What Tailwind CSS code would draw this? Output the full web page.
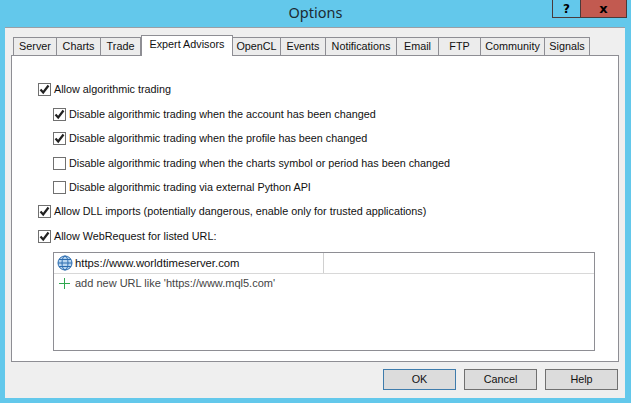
<!DOCTYPE html>
<html lang="en">
<head>
  <meta charset="UTF-8" />
  <title>Options</title>
  <script src="https://cdn.jsdelivr.net/npm/@tailwindcss/browser@4"></script>
</head>
<body class="w-[631px] h-[403px] overflow-hidden bg-[#63c8eb] font-['Liberation_Sans',sans-serif] text-[10.8px] text-[#111]">
  <div class="relative h-[403px] flex flex-col">
    <!-- title bar -->
    <div class="h-[27px] shrink-0 flex items-center justify-center pb-[1px] font-['Noto_Sans',sans-serif] text-[14.5px] text-[#1c2b33]">Options</div>
    <div class="absolute top-0 left-[552px] flex h-[18px] border border-t-0 border-[#4a3a3a]">
      <div class="w-[28px] border-r border-[#4a3a3a] flex items-center justify-center font-['DejaVu_Sans',sans-serif] font-bold text-[12px] text-black">?</div>
      <div class="w-[45px] bg-[#c25a50] flex items-center justify-center font-['DejaVu_Sans',sans-serif] font-bold text-[13px] text-black">x</div>
    </div>

    <!-- client area -->
    <div class="ml-[5px] w-[620px] h-[371px] bg-[#efefef] border-t border-[#9a9fa6] pt-[7px] px-[6px] flex flex-col">
      <!-- tabs -->
      <div class="h-[20px] flex items-end pl-[2px] relative z-10 whitespace-nowrap">
        <div class="w-[44px] h-[18px] border border-b-0 border-[#8e8e94] bg-[#ececec] flex items-center justify-center">Server</div>
        <div class="w-[44px] h-[18px] border border-b-0 border-l-0 border-[#8e8e94] bg-[#ececec] flex items-center justify-center">Charts</div>
        <div class="w-[40px] h-[18px] border border-b-0 border-l-0 border-[#8e8e94] bg-[#ececec] flex items-center justify-center">Trade</div>
        <div class="w-[92px] h-[21px] -mb-[1px] border border-b-0 border-[#8e8e94] bg-white flex items-center justify-center pb-[3px]">Expert Advisors</div>
        <div class="w-[48px] h-[18px] border border-b-0 border-l-0 border-[#8e8e94] bg-[#ececec] flex items-center justify-center">OpenCL</div>
        <div class="w-[45px] h-[18px] border border-b-0 border-l-0 border-[#8e8e94] bg-[#ececec] flex items-center justify-center">Events</div>
        <div class="w-[71px] h-[18px] border border-b-0 border-l-0 border-[#8e8e94] bg-[#ececec] flex items-center justify-center">Notifications</div>
        <div class="w-[42px] h-[18px] border border-b-0 border-l-0 border-[#8e8e94] bg-[#ececec] flex items-center justify-center">Email</div>
        <div class="w-[42px] h-[18px] border border-b-0 border-l-0 border-[#8e8e94] bg-[#ececec] flex items-center justify-center">FTP</div>
        <div class="w-[64px] h-[18px] border border-b-0 border-l-0 border-[#8e8e94] bg-[#ececec] flex items-center justify-center">Community</div>
        <div class="w-[45px] h-[18px] border border-b-0 border-l-0 border-[#8e8e94] bg-[#ececec] flex items-center justify-center">Signals</div>
      </div>

      <!-- panel -->
      <div class="w-[608px] h-[307px] bg-white border border-[#8e8e94] pl-[26px] pt-[26px] flex flex-col">
        <label class="h-[14px] flex items-center gap-[3px] mb-[11px]">
          <span class="w-[13px] h-[13px] border border-[#707070] flex items-center justify-center"><svg width="11" height="11" viewBox="0 0 11 11"><path d="M1.5 5.5 L4.2 8.5 L9.5 1.5" fill="none" stroke="#222" stroke-width="2.2"/></svg></span>
          Allow algorithmic trading
        </label>
        <label class="h-[14px] ml-[15px] flex items-center gap-[3px] mb-[10px]">
          <span class="w-[13px] h-[13px] border border-[#707070] flex items-center justify-center"><svg width="11" height="11" viewBox="0 0 11 11"><path d="M1.5 5.5 L4.2 8.5 L9.5 1.5" fill="none" stroke="#222" stroke-width="2.2"/></svg></span>
          Disable algorithmic trading when the account has been changed
        </label>
        <label class="h-[14px] ml-[15px] flex items-center gap-[3px] mb-[11px]">
          <span class="w-[13px] h-[13px] border border-[#707070] flex items-center justify-center"><svg width="11" height="11" viewBox="0 0 11 11"><path d="M1.5 5.5 L4.2 8.5 L9.5 1.5" fill="none" stroke="#222" stroke-width="2.2"/></svg></span>
          Disable algorithmic trading when the profile has been changed
        </label>
        <label class="h-[14px] ml-[15px] flex items-center gap-[3px] mb-[10px]">
          <span class="w-[13px] h-[13px] border border-[#707070]"></span>
          Disable algorithmic trading when the charts symbol or period has been changed
        </label>
        <label class="h-[14px] ml-[15px] flex items-center gap-[3px] mb-[10px]">
          <span class="w-[13px] h-[13px] border border-[#707070]"></span>
          Disable algorithmic trading via external Python API
        </label>
        <label class="h-[14px] flex items-center gap-[3px] mb-[11px]">
          <span class="w-[13px] h-[13px] border border-[#707070] flex items-center justify-center"><svg width="11" height="11" viewBox="0 0 11 11"><path d="M1.5 5.5 L4.2 8.5 L9.5 1.5" fill="none" stroke="#222" stroke-width="2.2"/></svg></span>
          Allow DLL imports (potentially dangerous, enable only for trusted applications)
        </label>
        <label class="h-[14px] flex items-center gap-[3px] mb-[9px]">
          <span class="w-[13px] h-[13px] border border-[#707070] flex items-center justify-center"><svg width="11" height="11" viewBox="0 0 11 11"><path d="M1.5 5.5 L4.2 8.5 L9.5 1.5" fill="none" stroke="#222" stroke-width="2.2"/></svg></span>
          Allow WebRequest for listed URL:
        </label>

        <!-- url list -->
        <div class="ml-[15px] w-[542px] h-[99px] border border-[#8e8e94]">
          <div class="h-[21px] flex items-center border-b border-[#d8d8d8]">
            <div class="w-[270px] h-full flex items-center gap-[2px] pl-[3px] border-r border-[#d0d0d0] text-[11.3px]">
              <svg width="16" height="16" viewBox="0 0 16 16"><circle cx="8" cy="8" r="7" fill="#b9d6f0" stroke="#2b6cb0"/><ellipse cx="8" cy="8" rx="3" ry="7" fill="none" stroke="#2b6cb0"/><path d="M1 8h14M2 4.5h12M2 11.5h12" stroke="#2b6cb0" fill="none"/></svg>
              https://www.worldtimeserver.com
            </div>
          </div>
          <div class="h-[19px] flex items-center gap-[5px] pl-[5px] text-[11px] text-[#444]">
            <svg width="11" height="11" viewBox="0 0 11 11"><path d="M5.5 0v11M0 5.5h11" stroke="#2fa84f" stroke-width="1" fill="none"/></svg>
            add new URL like 'https://www.mql5.com'
          </div>
        </div>
      </div>

      <!-- buttons -->
      <div class="flex justify-end gap-[8px] mt-[7px] pr-[1px]">
        <button class="w-[73px] h-[21px] bg-[#dcdcdc] border border-[#3f7cac]">OK</button>
        <button class="w-[73px] h-[21px] bg-[#dcdcdc] border border-[#707070]">Cancel</button>
        <button class="w-[73px] h-[21px] bg-[#dcdcdc] border border-[#707070]">Help</button>
      </div>
    </div>
  </div>
</body>
</html>
